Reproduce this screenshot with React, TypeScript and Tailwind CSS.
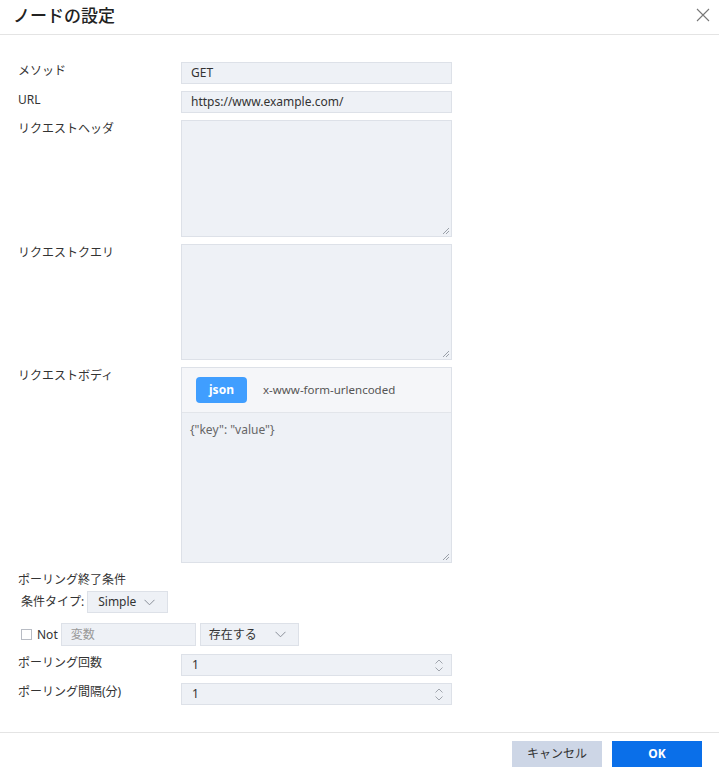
import React from "react";

const Chevron = ({ className = "" }: { className?: string }) => (
  <svg width="11" height="7" viewBox="0 0 11 7" className={className} fill="none" stroke="#8a8f99" strokeWidth="1">
    <path d="M0.5 0.8 L5.5 5.8 L10.5 0.8" />
  </svg>
);

const Spinner = () => (
  <div className="flex flex-col items-center gap-[3px] mr-[8px]">
    <svg width="8" height="5" viewBox="0 0 8 5" fill="none" stroke="#a0a5ad" strokeWidth="1">
      <path d="M0.5 4.5 L4 1 L7.5 4.5" />
    </svg>
    <svg width="8" height="5" viewBox="0 0 8 5" fill="none" stroke="#a0a5ad" strokeWidth="1">
      <path d="M0.5 0.5 L4 4 L7.5 0.5" />
    </svg>
  </div>
);

const Grip = () => (
  <svg width="7" height="7" viewBox="0 0 7 7" className="absolute right-[2px] bottom-[2px]" stroke="#9aa0a8" strokeWidth="1">
    <path d="M1 7 L7 1 M4 7 L7 4" />
  </svg>
);

const Label = ({ children }: { children: React.ReactNode }) => (
  <div className="w-[181px] shrink-0 pl-[18px] text-[12px] leading-[18px] text-[#333]">{children}</div>
);

const TextInput = ({ value }: { value: string }) => (
  <div className="w-[271px] h-[22px] bg-[#eef1f6] border border-[#dde1e8] flex items-center pl-[9px] text-[12px] text-[#333]">
    {value}
  </div>
);

const TextArea = ({ h, children }: { h: string; children?: React.ReactNode }) => (
  <div className={`w-[271px] ${h} bg-[#eef1f6] border border-[#dde1e8] relative`}>
    {children}
    <Grip />
  </div>
);

const NumInput = ({ value }: { value: string }) => (
  <div className="w-[271px] h-[22px] bg-[#eef1f6] border border-[#dde1e8] flex items-center justify-between pl-[10px] text-[12px] text-[#333]">
    <span>{value}</span>
    <Spinner />
  </div>
);

export default function App() {
  return (
    <div
      className="w-[719px] h-[777px] bg-white flex flex-col text-[#333]"
      style={{ fontFamily: '"Noto Sans", "Noto Sans CJK JP", sans-serif' }}
    >
      {/* header */}
      <div className="h-[35px] shrink-0 border-b border-[#e4e4e4] flex items-center justify-between pl-[13px] pr-[9px]">
        <div className="text-[17px] font-medium text-[#222] leading-none -mt-[5px]" style={{ fontFamily: '"Noto Sans CJK JP", sans-serif' }}>
          ノードの設定
        </div>
        <svg width="14" height="14" viewBox="0 0 14 14" stroke="#777" strokeWidth="1.1" className="-mt-[5px]">
          <path d="M1 1 L13 13 M13 1 L1 13" />
        </svg>
      </div>

      {/* body */}
      <div className="flex-1 flex flex-col pt-[27px]">
        <div className="flex flex-col gap-[7px]">
          <div className="flex items-start">
            <Label>メソッド</Label>
            <TextInput value="GET" />
          </div>
          <div className="flex items-start">
            <Label>URL</Label>
            <TextInput value="https://www.example.com/" />
          </div>
          <div className="flex items-start">
            <Label>リクエストヘッダ</Label>
            <TextArea h="h-[117px]" />
          </div>
          <div className="flex items-start">
            <Label>リクエストクエリ</Label>
            <TextArea h="h-[116px]" />
          </div>
          <div className="flex items-start">
            <Label>リクエストボディ</Label>
            <div className="w-[271px] h-[196px] border border-[#dde1e8] flex flex-col">
              <div className="h-[45px] shrink-0 bg-[#f5f6f9] border-b border-[#e2e5ea] flex items-center pl-[14px]">
                <div className="w-[51px] h-[26px] rounded-[4px] bg-[#409eff] text-white text-[12px] font-bold flex items-center justify-center">
                  json
                </div>
                <div className="ml-[16px] text-[11.5px] text-[#555]">x-www-form-urlencoded</div>
              </div>
              <div className="flex-1 bg-[#eef1f6] relative pl-[8px] pt-[8px] text-[12px] text-[#666] leading-[18px]">
                {'{"key": "value"}'}
                <Grip />
              </div>
            </div>
          </div>
        </div>

        <div className="pl-[18px] mt-[8px] text-[12px] leading-[18px] text-[#333]">ポーリング終了条件</div>
        <div className="flex items-center pl-[21px] mt-[2px]">
          <span className="text-[12px] text-[#333]">条件タイプ:</span>
          <div className="ml-[3px] w-[81px] h-[22px] bg-[#eef1f6] border border-[#dde1e8] flex items-center pl-[10px] pr-[12px] justify-between text-[12px]">
            <span>Simple</span>
            <Chevron />
          </div>
        </div>
        <div className="flex items-center pl-[21px] mt-[10px]">
          <div className="w-[11px] h-[11px] border border-[#b8bcc4] bg-white" />
          <span className="ml-[5px] text-[12px] text-[#333]">Not</span>
          <div className="ml-[3px] w-[135px] h-[23px] bg-[#eef1f6] border border-[#dde1e8] flex items-center pl-[9px] text-[12px] text-[#999]">
            変数
          </div>
          <div className="ml-[4px] w-[99px] h-[23px] bg-[#eef1f6] border border-[#dde1e8] flex items-center pl-[8px] pr-[12px] justify-between text-[12px]">
            <span>存在する</span>
            <Chevron />
          </div>
        </div>

        <div className="flex flex-col gap-[7px] mt-[8px]">
          <div className="flex items-start">
            <Label>ポーリング回数</Label>
            <NumInput value="1" />
          </div>
          <div className="flex items-start">
            <Label>ポーリング間隔(分)</Label>
            <NumInput value="1" />
          </div>
        </div>
      </div>

      {/* footer */}
      <div className="h-[45px] shrink-0 border-t border-[#e4e4e4] flex items-start justify-end pt-[8px] pr-[17px] gap-[10px]">
        <div className="w-[90px] h-[26px] bg-[#cdd6e6] text-[12px] text-[#333] flex items-center justify-center">キャンセル</div>
        <div className="w-[90px] h-[26px] bg-[#0a6fe9] text-[12px] text-white font-bold flex items-center justify-center">OK</div>
      </div>
    </div>
  );
}
